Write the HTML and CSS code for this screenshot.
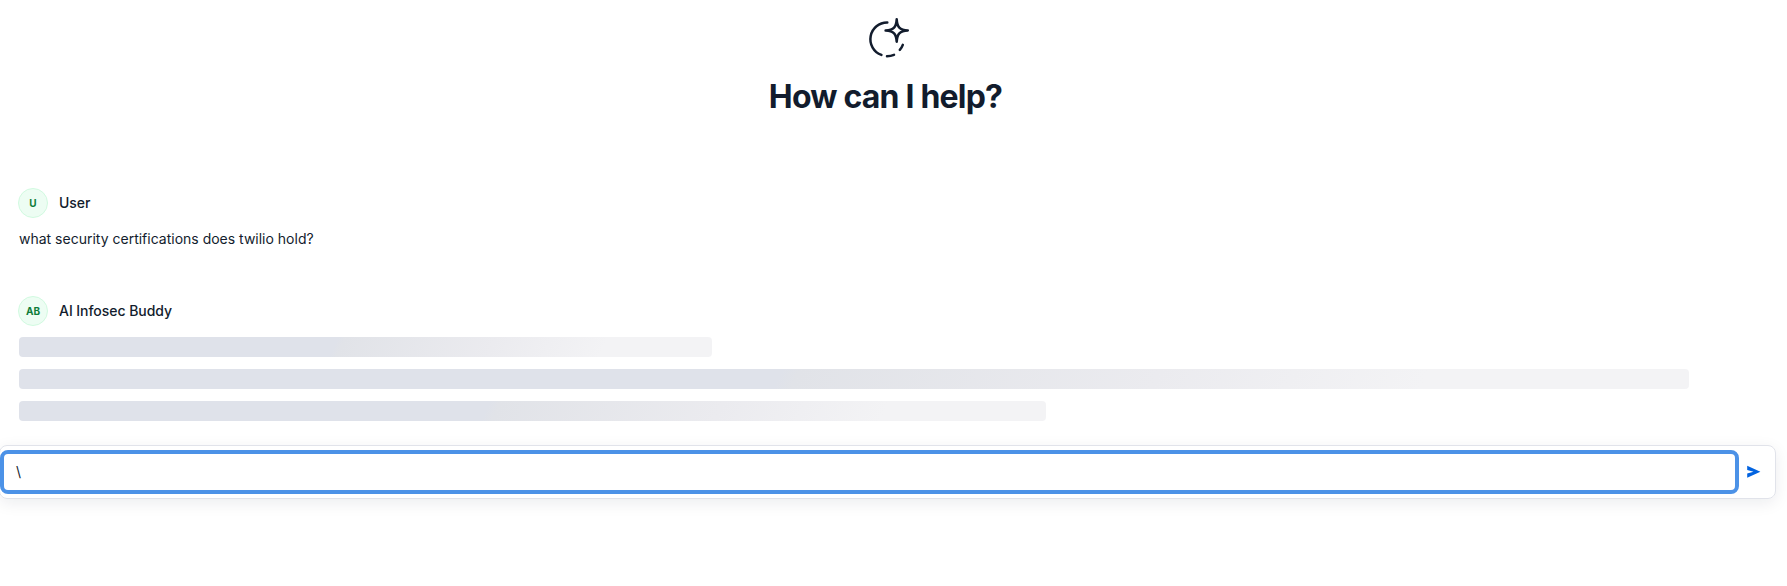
FILE: index.html
```html
<!DOCTYPE html>
<html lang="en">
<head>
<meta charset="utf-8">
<title>AI Infosec Buddy</title>
<link rel="stylesheet" href="styles.css">
</head>
<body>
<header class="hero">
  <svg class="hero-icon" width="44" height="44" viewBox="866 16 44 44" fill="none" stroke="currentColor" stroke-width="2.5" stroke-linecap="round" stroke-linejoin="round">
    <path d="M887.3 22.5A16.7 16.7 0 0 0 881.4 54.9M887 56.2Q890.8 56.1 894 54.8M899.8 49.9Q901.8 47.7 902.8 44.9"/>
    <path d="M896.7 19.3C897.2 27 899.5 30 907.8 30.5C899.5 31 897.2 34 896.7 41.7C896.2 34 893.9 31 885.6 30.5C893.9 30 896.2 27 896.7 19.3Z"/>
  </svg>
  <h1 class="hero-title">How can I help?</h1>
</header>
<main class="chat">
  <section class="message">
    <div class="author"><span class="avatar">U</span><span class="name">User</span></div>
    <p class="text">what security certifications does twilio hold?</p>
  </section>
  <section class="message">
    <div class="author"><span class="avatar">AB</span><span class="name">AI Infosec Buddy</span></div>
    <div class="skeleton">
      <div class="bar bar-short"></div>
      <div class="bar bar-long"></div>
      <div class="bar bar-medium"></div>
    </div>
  </section>
</main>
<form class="composer">
  <div class="field">\</div>
  <svg class="send" width="14" height="14" viewBox="0 0 14 14" fill="currentColor"><path d="M.2 .8 13.4 6.8 .2 12.8V8.6L6.5 6.8 .2 5Z"/></svg>
</form>
</body>
</html>
```
FILE: styles.css
```css
* { box-sizing: border-box; }
body {
  margin: 0;
  height: 586px;
  overflow: hidden;
  background: #fff;
  color: #121c2d;
  font-family: Inter, "Liberation Sans", sans-serif;
  font-size: 14px;
  line-height: 20px;
}
.hero {
  display: flex;
  flex-direction: column;
  align-items: center;
  height: 188px;
  padding-top: 16px;
  padding-right: 14px;
}
.hero-icon { margin-left: 3px; display: block; }
.hero-title {
  margin: 15px 2px 0 0;
  font-size: 32px;
  line-height: 44px;
  font-weight: 700;
  letter-spacing: -0.8px;
}
.chat { padding-left: 19px; }
.message { height: 108px; }
.author { display: flex; align-items: center; gap: 11px; height: 30px; margin-left: -1px; }
.avatar {
  display: flex;
  align-items: center;
  justify-content: center;
  width: 30px;
  height: 30px;
  border-radius: 50%;
  border: 1px solid #d1fae0;
  background: #edfdf3;
  color: #0e7c3a;
  font-size: 10px;
  font-weight: 700;
}
.name { font-weight: 500; letter-spacing: -0.05px; }
.text { margin: 11px 0 0; }
.skeleton { display: flex; flex-direction: column; gap: 12px; margin-top: 11px; }
.bar {
  height: 20px;
  border-radius: 4px;
  background: linear-gradient(115deg, #dfe2ea 45.5%, #e1e3e8 46.5%, #ebebef 68%, #f3f3f5 84%);
}
.bar-short { width: 693px; }
.bar-long { width: 1670px; }
.bar-medium { width: 1027px; }
.composer {
  display: flex;
  align-items: center;
  width: 1777px;
  height: 54px;
  margin: 41px 0 0 -1px;
  border: 1px solid #e1e3ea;
  border-radius: 8px;
  box-shadow: 0 4px 16px rgba(18, 28, 45, 0.08);
}
.field {
  display: flex;
  align-items: center;
  width: 1739px;
  height: 44px;
  padding-left: 12px;
  border: 4px solid #4c92e7;
  border-radius: 8px;
}
.send { margin-left: 8px; color: #0263e0; }
```
